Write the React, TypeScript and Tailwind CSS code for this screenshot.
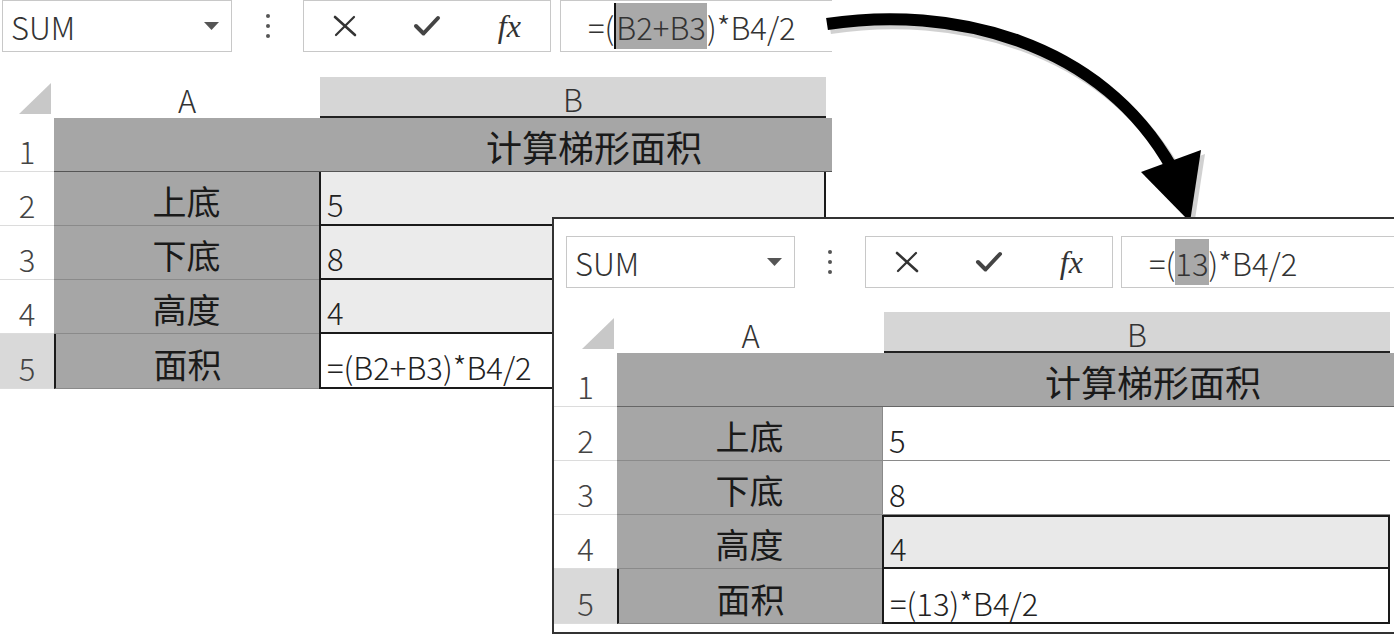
import React from "react";

const font = "font-['Noto_Sans_CJK_SC',sans-serif]";

function Dots() {
  return (
    <div className="flex flex-col items-center gap-[6px]">
      <div className="w-[4px] h-[4px] rounded-full bg-[#555]"></div>
      <div className="w-[4px] h-[4px] rounded-full bg-[#555]"></div>
      <div className="w-[4px] h-[4px] rounded-full bg-[#555]"></div>
    </div>
  );
}

function Caret() {
  return (
    <svg width="15" height="8" viewBox="0 0 15 8">
      <path d="M0 0 L15 0 L7.5 8 Z" fill="#555" />
    </svg>
  );
}

function Buttons() {
  return (
    <div className="w-[248px] h-full border border-[#c8c8c8] flex items-center">
      <div className="w-[83px] flex justify-center">
        <svg width="26" height="24" viewBox="0 0 26 24">
          <path d="M3 3 L23 21" stroke="#333" strokeWidth="2.6" strokeLinecap="round" />
          <path d="M22 3 L4 21" stroke="#333" strokeWidth="2.2" strokeLinecap="round" />
        </svg>
      </div>
      <div className="w-[83px] flex justify-center">
        <svg width="28" height="22" viewBox="0 0 28 22">
          <path d="M3 11 L10.5 18.5 L25 3" fill="none" stroke="#444" strokeWidth="4" strokeLinecap="round" strokeLinejoin="round" />
        </svg>
      </div>
      <div className="w-[82px] flex justify-center">
        <span className="font-['Liberation_Serif',serif] italic text-[32px] leading-none text-[#333]">fx</span>
      </div>
    </div>
  );
}

function NameBox({ w }: { w: string }) {
  return (
    <div className={`${w} h-full border border-[#c8c8c8] flex items-center justify-between pl-[8px] pr-[12px]`}>
      <span className="text-[31px] font-light text-[#333] leading-none">SUM</span>
      <Caret />
    </div>
  );
}

function Corner({ w }: { w: string }) {
  return (
    <div className={`${w} h-full flex items-end justify-end pr-[3px] pb-[4px]`}>
      <svg width="32" height="31" viewBox="0 0 32 31">
        <path d="M32 0 L32 31 L0 31 Z" fill="#c8c8c8" />
      </svg>
    </div>
  );
}

function RowHead({ w, n, sel }: { w: string; n: number; sel?: boolean }) {
  return (
    <div
      className={`${w} h-full flex items-end justify-center pb-[2px] border-b border-[#dcdcdc] text-[31px] font-light text-[#444] leading-none ${
        sel ? "bg-[#d9d9d9]" : "bg-white"
      }`}
    >
      <span className="pb-[3px]">{n}</span>
    </div>
  );
}

function Label({ text, sel }: { text: string; sel?: boolean }) {
  return (
    <div
      className={`w-[265px] h-full bg-[#a6a6a6] border-b border-[#8a8a8a] flex items-end justify-center pb-[7px] text-[34px] leading-none text-[#1a1a1a] ${
        sel ? "border-l-2 border-l-[#1a1a1a]" : ""
      }`}
    >
      {text}
    </div>
  );
}

function Formula({ children }: { children: React.ReactNode }) {
  return (
    <div className="flex-1 h-full border-y border-l border-[#c8c8c8] flex items-center pl-[27px] text-[31px] font-light text-[#333] leading-none">
      {children}
    </div>
  );
}

export default function App() {
  return (
    <div className={`relative w-[1394px] h-[634px] bg-white overflow-hidden ${font}`}>
      {/* first sheet */}
      <div className="w-[832px]">
        <div className="h-[52px] flex">
          <div className="w-[2px]"></div>
          <NameBox w="w-[230px]" />
          <div className="w-[71px] flex items-center justify-center">
            <Dots />
          </div>
          <Buttons />
          <div className="w-[9px]"></div>
          <Formula>
            <span>=(</span>
            <span className="bg-[#a9a9a9] border-l-2 border-[#111] h-[46px] flex items-center pr-[1px]">B2+B3</span>
            <span>)*B4/2</span>
          </Formula>
        </div>
        <div className="h-[25px]"></div>
        <div className="h-[41px] flex">
          <Corner w="w-[54px]" />
          <div className="w-[266px] flex items-end justify-center pb-[3px] text-[31px] font-light text-[#333] leading-none">A</div>
          <div className="w-[506px] bg-[#d6d6d6] border-b-2 border-[#222] flex items-end justify-center pb-[2px] text-[31px] font-light text-[#333] leading-none">B</div>
        </div>
        <div className="h-[54px] flex">
          <RowHead w="w-[54px]" n={1} />
          <div className="w-[778px] h-full bg-[#a6a6a6] border-b border-[#555] flex items-end pl-[432px] pb-[7px] text-[36px] leading-none text-[#1a1a1a]">
            计算梯形面积
          </div>
        </div>
        {[
          ["上底", "5"],
          ["下底", "8"],
          ["高度", "4"],
        ].map(([l, v], i) => (
          <div key={l} className="h-[54px] flex">
            <RowHead w="w-[54px]" n={i + 2} />
            <Label text={l} />
            <div className="w-[507px] h-full bg-[#ebebeb] border-l-2 border-r-2 border-b-2 border-[#1a1a1a] flex items-end pl-[6px] pb-[5px] text-[31px] font-light text-[#222] leading-none">
              {v}
            </div>
          </div>
        ))}
        <div className="h-[55px] flex">
          <RowHead w="w-[54px]" n={5} sel />
          <Label text="面积" sel />
          <div className="w-[507px] h-full bg-white border-l-2 border-r-2 border-b-2 border-[#1a1a1a] flex items-end pl-[6px] pb-[5px] text-[31px] font-light text-[#222] leading-none whitespace-nowrap">
            =(B2+B3)*B4/2
          </div>
        </div>
      </div>

      {/* arrow */}
      <svg className="absolute left-0 top-0" width="1394" height="634" viewBox="0 0 1394 634">
        <path d="M830 28 C953 9 1103 44 1176 172" fill="none" stroke="#9a9a9a" strokeWidth="12" opacity="0.45" />
        <path d="M827 24 C950 5 1100 40 1172 168" fill="none" stroke="#000" strokeWidth="12" />
        <path d="M1145 176 L1205 154 L1194 226 Z" fill="#9a9a9a" opacity="0.45" />
        <path d="M1141 172 L1201 150 L1190 222 Z" fill="#000" />
      </svg>

      {/* second sheet window */}
      <div className="absolute left-[552px] top-[217px] w-[844px] h-[417px] border-2 border-[#333] bg-white">
        <div className="h-[17px]"></div>
        <div className="h-[52px] flex">
          <div className="w-[12px]"></div>
          <NameBox w="w-[229px]" />
          <div className="w-[70px] flex items-center justify-center">
            <Dots />
          </div>
          <Buttons />
          <div className="w-[8px]"></div>
          <Formula>
            <span>=(</span>
            <span className="bg-[#a9a9a9] h-[46px] flex items-center">13</span>
            <span>)*B4/2</span>
          </Formula>
        </div>
        <div className="h-[24px]"></div>
        <div className="h-[41px] flex">
          <Corner w="w-[63px]" />
          <div className="w-[267px] flex items-end justify-center pb-[3px] text-[31px] font-light text-[#333] leading-none">A</div>
          <div className="w-[506px] bg-[#d6d6d6] border-b-2 border-[#222] flex items-end justify-center pb-[2px] text-[31px] font-light text-[#333] leading-none">B</div>
        </div>
        <div className="h-[54px] flex">
          <RowHead w="w-[63px]" n={1} />
          <div className="flex-1 h-full bg-[#a6a6a6] border-b border-[#666] flex items-end pl-[428px] pb-[7px] text-[36px] leading-none text-[#1a1a1a]">
            计算梯形面积
          </div>
        </div>
        {[
          ["上底", "5"],
          ["下底", "8"],
        ].map(([l, v], i) => (
          <div key={l} className="h-[54px] flex">
            <RowHead w="w-[63px]" n={i + 2} />
            <Label text={l} />
            <div className="w-[508px] h-full bg-white border-l border-b border-[#8a8a8a] flex items-end pl-[6px] pb-[5px] text-[31px] font-light text-[#222] leading-none">
              {v}
            </div>
          </div>
        ))}
        <div className="h-[54px] flex">
          <RowHead w="w-[63px]" n={4} />
          <Label text="高度" />
          <div className="w-[508px] h-full bg-[#e9e9e9] border-2 border-[#1a1a1a] flex items-end pl-[6px] pb-[4px] text-[31px] font-light text-[#222] leading-none">
            4
          </div>
        </div>
        <div className="h-[55px] flex">
          <RowHead w="w-[63px]" n={5} sel />
          <Label text="面积" sel />
          <div className="w-[508px] h-full bg-white border-l-2 border-r-2 border-b-2 border-[#1a1a1a] flex items-end pl-[6px] pb-[4px] text-[31px] font-light text-[#222] leading-none whitespace-nowrap">
            =(13)*B4/2
          </div>
        </div>
      </div>
    </div>
  );
}
